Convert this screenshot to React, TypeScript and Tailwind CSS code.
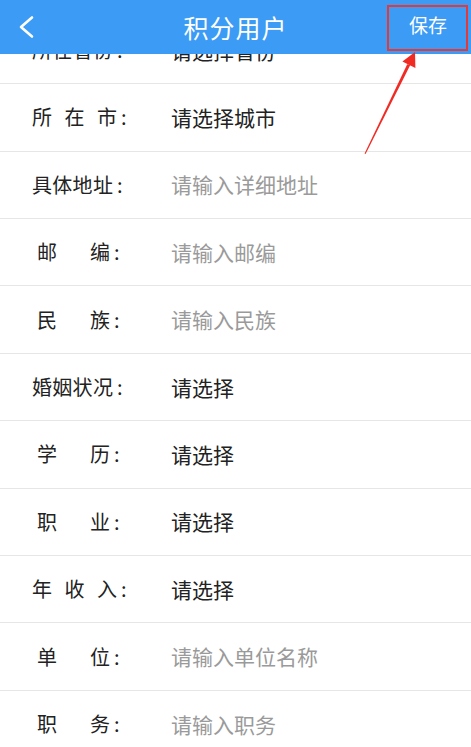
import {FC} from 'react';

type Field = {
  label: string[];
  value: string;
  filled: boolean;
};

const fields: Field[] = [
  {label: ['所', '在', '省', '份'], value: '请选择省份', filled: true},
  {label: ['所', '在', '市'], value: '请选择城市', filled: true},
  {label: ['具', '体', '地', '址'], value: '请输入详细地址', filled: false},
  {label: ['邮', '编'], value: '请输入邮编', filled: false},
  {label: ['民', '族'], value: '请输入民族', filled: false},
  {label: ['婚', '姻', '状', '况'], value: '请选择', filled: true},
  {label: ['学', '历'], value: '请选择', filled: true},
  {label: ['职', '业'], value: '请选择', filled: true},
  {label: ['年', '收', '入'], value: '请选择', filled: true},
  {label: ['单', '位'], value: '请输入单位名称', filled: false},
  {label: ['职', '务'], value: '请输入职务', filled: false},
];

const labelSpacing = (n: number) => {
  if (n === 2) return 'pl-[37px] gap-[33px]';
  if (n === 3) return 'pl-[32px] gap-[12.5px]';
  return 'pl-[32px] gap-[0.3px]';
};

const Row: FC<{field: Field}> = ({field}) => (
  <div className="flex h-[67.4px] items-center border-b border-[#e6e6e6] leading-none">
    <div className="flex w-[171px] shrink-0 items-center text-[20px] text-[#222]">
      <div className={`flex ${labelSpacing(field.label.length)}`}>
        {field.label.map((ch, i) => (
          <span key={i}>{ch}</span>
        ))}
      </div>
      <span className="ml-[4px]">:</span>
    </div>
    <span className={`text-[21px] ${field.filled ? 'text-[#222]' : 'text-[#9a9a9a]'}`}>{field.value}</span>
  </div>
);

export default function App() {
  return (
    <div
      className="relative flex h-[747px] w-[471px] flex-col overflow-hidden bg-white"
      style={{fontFamily: '"Noto Sans CJK SC", "Noto Sans", sans-serif'}}>
      <header className="relative flex h-[54px] shrink-0 items-center justify-center bg-[#3b9bf5]">
        <button className="absolute left-[16px] top-[13px] h-[28px] w-[22px]">
          <svg viewBox="0 0 22 28" className="h-full w-full" fill="none">
            <polyline
              points="16,4.5 5,14 16,23.5"
              stroke="white"
              strokeWidth="2.6"
              strokeLinecap="round"
              strokeLinejoin="round"
            />
          </svg>
        </button>
        <h1 className="text-[25px] leading-none tracking-[1px] text-white">积分用户</h1>
        <span className="absolute right-[24px] top-[15px] text-[19px] leading-none text-white">保存</span>
        <div className="absolute left-[387px] top-[5px] h-[46px] w-[81px] border-2 border-[#e23a3a]" />
      </header>

      <div className="flex-1 overflow-hidden">
        <div className="-mt-[37.1px]">
          {fields.map((f, i) => (
            <Row field={f} key={i} />
          ))}
        </div>
      </div>

      <svg className="pointer-events-none absolute left-0 top-0 z-20 h-[747px] w-[471px]" viewBox="0 0 471 747">
        <polygon points="364.6,153.5 365.6,153.9 410.4,64.8 407.2,64.3" fill="#f02b24" />
        <polygon points="415,52 415.4,68 402.4,61.4" fill="#f02b24" />
      </svg>
    </div>
  );
}
